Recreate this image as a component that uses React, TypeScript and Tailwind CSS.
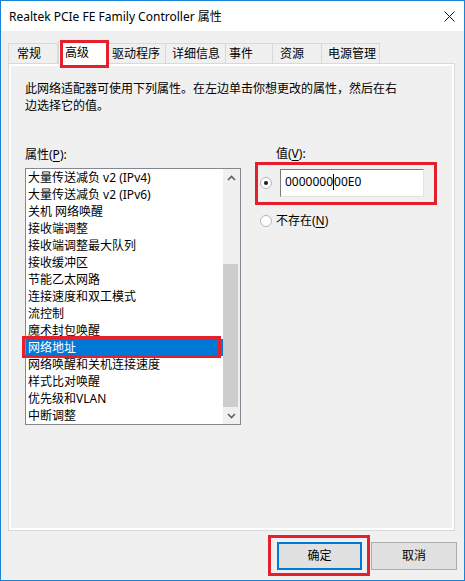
import type { ReactNode } from 'react'

const props = [
    '大量传送减负 v2 (IPv4)',
    '大量传送减负 v2 (IPv6)',
    '关机 网络唤醒',
    '接收端调整',
    '接收端调整最大队列',
    '接收缓冲区',
    '节能乙太网路',
    '连接速度和双工模式',
    '流控制',
    '魔术封包唤醒',
    '网络地址',
    '网络唤醒和关机连接速度',
    '样式比对唤醒',
    '优先级和VLAN',
    '中断调整',
]

const tabs = [
    { label: '常规', w: 'w-[50px]', pl: 'pl-[8px]' },
    { label: '高级', w: 'w-[50px]', pl: 'pl-[6px]', active: true },
    { label: '驱动程序', w: 'w-[58px]', pl: 'pl-[4px]' },
    { label: '详细信息', w: 'w-[60px]', pl: 'pl-[6px]' },
    { label: '事件', w: 'w-[47px]', pl: 'pl-[3px]' },
    { label: '资源', w: 'w-[49px]', pl: 'pl-[7px]' },
    { label: '电源管理', w: 'w-[58px]', pl: 'pl-[6px]' },
]

function RedBox({ className }: { className: string }) {
    return <div className={`absolute border-[3px] border-[#e3202c] pointer-events-none z-20 ${className}`} />
}

function Radio({ checked }: { checked?: boolean }) {
    return (
        <div className="w-[12px] h-[12px] rounded-full border border-[#b5b5b5] bg-white flex items-center justify-center shrink-0">
            {checked && <div className="w-[4px] h-[4px] rounded-full bg-[#1a1a1a]" />}
        </div>
    )
}

function Mn({ children }: { children: ReactNode }) {
    return <span className="underline underline-offset-2">{children}</span>
}

function Chevron({ up }: { up?: boolean }) {
    return (
        <svg width="9" height="6" viewBox="0 0 9 6">
            <polyline
                points={up ? '1,5 4.5,1.5 8,5' : '1,1 4.5,4.5 8,1'}
                fill="none"
                stroke="#606060"
                strokeWidth="1.6"
            />
        </svg>
    )
}

export default function App() {
    return (
        <div className="w-[465px] h-[581px] border border-[#1883d7] bg-[#f0f0f0] flex flex-col text-[12px] text-black font-['Noto_Sans','Noto_Sans_CJK_SC',sans-serif]">
            {/* title bar */}
            <div className="h-[30px] bg-white flex items-center justify-between pl-[8px] pr-[9px] shrink-0">
                <span className="leading-[17px]">Realtek PCIe FE Family Controller 属性</span>
                <svg width="11" height="11" viewBox="0 0 11 11">
                    <path d="M0.5 0.5 L10.5 10.5 M10.5 0.5 L0.5 10.5" stroke="#111" strokeWidth="1" />
                </svg>
            </div>

            <div className="flex-1 flex flex-col pl-[7px] pr-[9px] pt-[10px]">
                {/* tabs */}
                <div className="h-[22px] flex items-end relative z-10">
                    {tabs.map((t) =>
                        t.active ? (
                            <div
                                key={t.label}
                                className={`relative ${t.w} ${t.pl} h-[23px] -mb-px bg-white border border-b-0 border-[#d9d9d9] leading-[17px] pt-[2px]`}
                            >
                                {t.label}
                                <RedBox className="left-[1px] top-[-2px] w-[49px] h-[28px]" />
                            </div>
                        ) : (
                            <div
                                key={t.label}
                                className={`${t.w} ${t.pl} h-[20px] bg-[#f0f0f0] border border-b-0 border-l-0 first:border-l border-[#d9d9d9] leading-[17px] pt-[1px]`}
                            >
                                {t.label}
                            </div>
                        )
                    )}
                </div>

                {/* panel */}
                <div className="w-[447px] h-[468px] border border-[#d9d9d9] bg-white p-[2px]">
                    <div className="h-full bg-[#f0f0f0] pl-[14px] pt-[14px]">
                        <p className="leading-[17px] w-[400px]">
                            此网络适配器可使用下列属性。在左边单击你想更改的属性，然后在右
                            <br />
                            边选择它的值。
                        </p>

                        <div className="flex mt-[31px]">
                            {/* left column */}
                            <div className="w-[216px] shrink-0">
                                <div className="leading-[17px] h-[17px] mt-[1px]">
                                    属性(<Mn>P</Mn>):
                                </div>
                                <div className="mt-[5px] h-[257px] border border-[#828790] bg-white flex">
                                    <div className="flex-1 flex flex-col">
                                        {props.map((p, i) =>
                                            i === 10 ? (
                                                <div key={p} className="relative h-[17px] leading-[17px] pl-[2px] bg-[#0078d7] text-white">
                                                    {p}
                                                    <RedBox className="left-[-4px] right-[2px] top-[-3px] bottom-[-2px]" />
                                                </div>
                                            ) : (
                                                <div key={p} className="h-[17px] leading-[17px] pl-[2px] whitespace-nowrap">
                                                    {p}
                                                </div>
                                            )
                                        )}
                                    </div>
                                    <div className="w-[17px] bg-[#f0f0f0] flex flex-col">
                                        <div className="h-[17px] flex items-center justify-center">
                                            <Chevron up />
                                        </div>
                                        <div className="flex-1 pt-[78px]">
                                            <div className="w-[15px] h-[143px] bg-[#cdcdcd]" />
                                        </div>
                                        <div className="h-[17px] flex items-center justify-center">
                                            <Chevron />
                                        </div>
                                    </div>
                                </div>
                            </div>

                            {/* right column */}
                            <div className="ml-[19px] flex flex-col">
                                <div className="leading-[17px] h-[17px] pl-[16px]">
                                    值(<Mn>V</Mn>):
                                </div>
                                <div className="relative flex items-center gap-[8px] mt-[7px]">
                                    <Radio checked />
                                    <div className="w-[144px] h-[28px] bg-white border border-[#7a7a7a] border-r-[#e3e3e3] border-b-[#e3e3e3] flex items-center pl-[4px] pb-[3px] leading-[17px]">
                                        <span>0000000</span>
                                        <span className="w-px h-[16px] bg-black" />
                                        <span>00E0</span>
                                    </div>
                                    <RedBox className="left-[-5px] right-[-13px] top-[-7px] bottom-[-8px]" />
                                </div>
                                <div className="flex items-center gap-[4px] mt-[15px]">
                                    <Radio />
                                    <span className="leading-[17px]">
                                        不存在(<Mn>N</Mn>)
                                    </span>
                                </div>
                            </div>
                        </div>
                    </div>
                </div>

                {/* buttons */}
                <div className="flex justify-end gap-[9px] mt-[11px] -mr-[2px]">
                    <div className="relative w-[85px] h-[28px] bg-[#e1e1e1] border-2 border-[#0078d7] flex items-center justify-center">
                        确定
                        <RedBox className="left-[-11px] right-[-10px] top-[-9px] bottom-[-8px]" />
                    </div>
                    <div className="w-[86px] h-[28px] bg-[#e1e1e1] border border-[#adadad] flex items-center justify-center">
                        取消
                    </div>
                </div>
            </div>
        </div>
    )
}
